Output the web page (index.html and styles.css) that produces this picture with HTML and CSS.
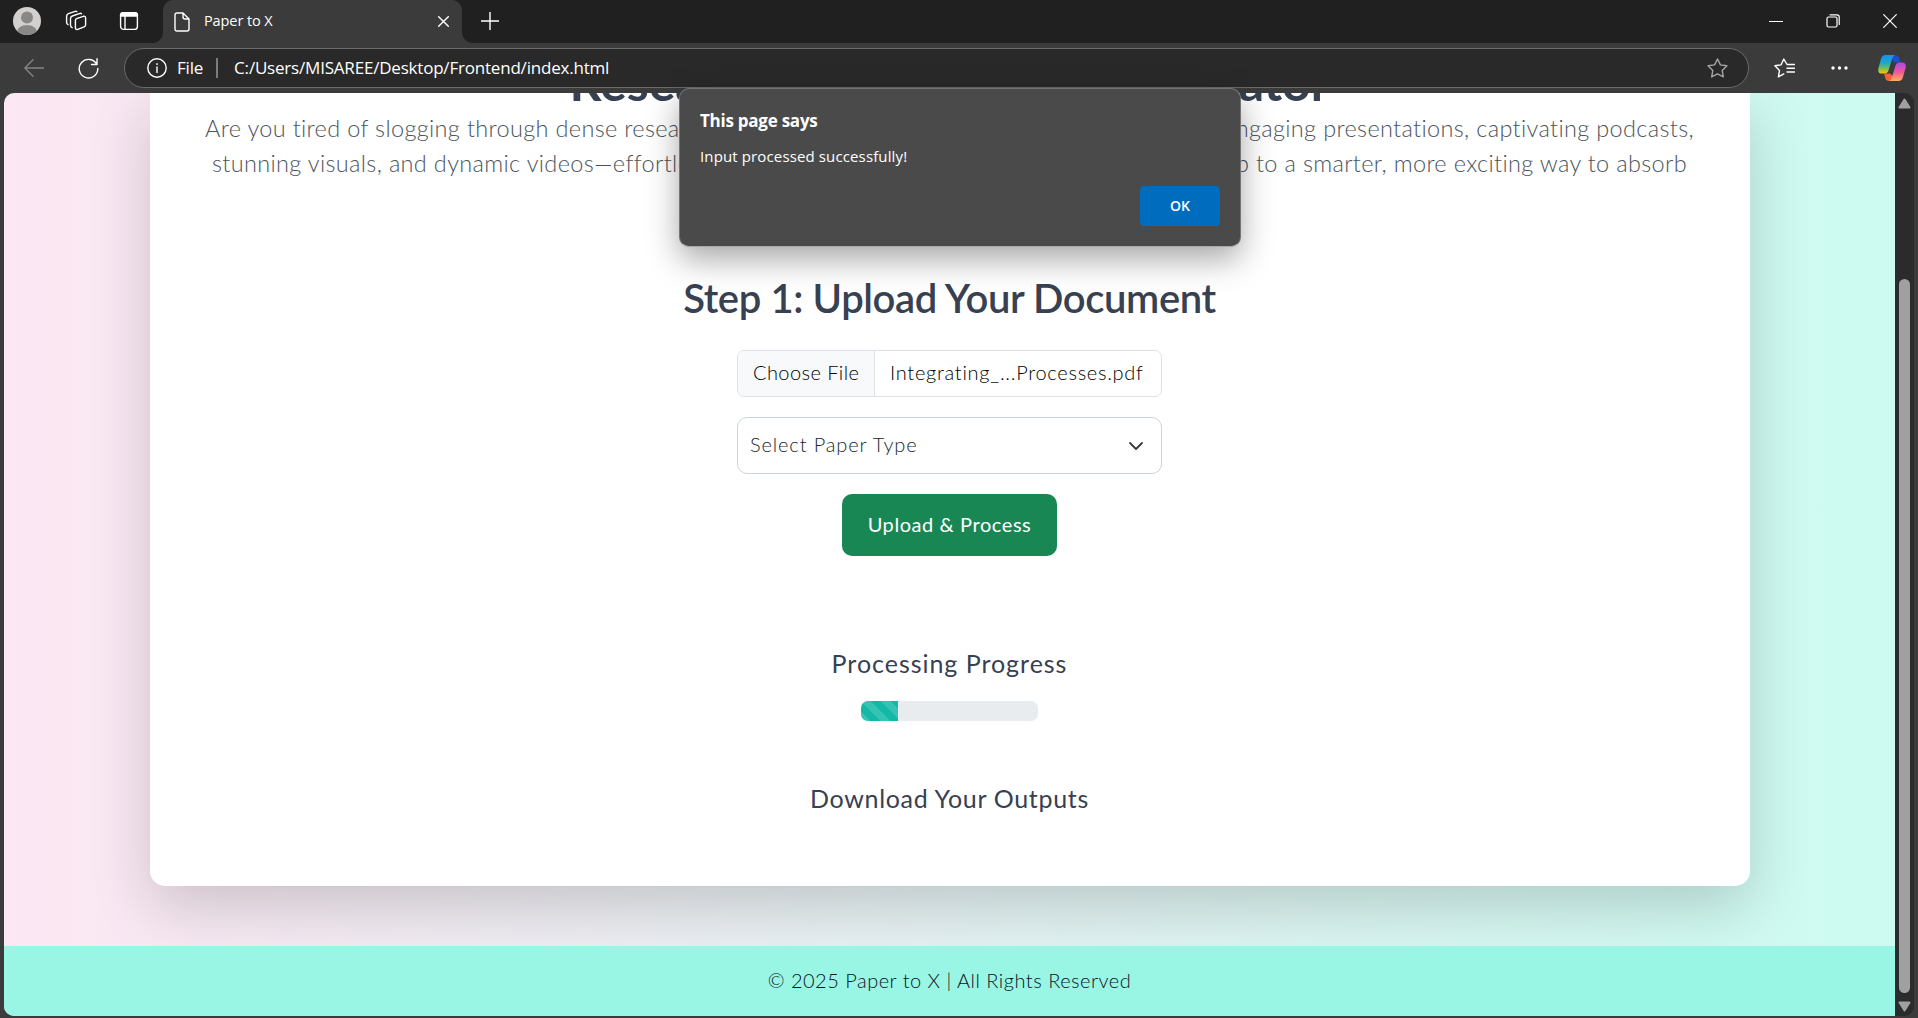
FILE: index.html
```html
<!DOCTYPE html>
<html lang="en">
<head>
<meta charset="utf-8">
<title>Paper to X</title>
<link rel="stylesheet" href="styles.css">
</head>
<body>
<div class="window">
  <header class="titlebar">
    <div class="tab-tools">
      <svg class="avatar" width="28" height="28" viewBox="0 0 28 28"><defs><clipPath id="face"><circle cx="14" cy="14" r="14"/></clipPath></defs><g clip-path="url(#face)"><rect width="28" height="28" fill="#d2d0ce"/><circle cx="14" cy="10.5" r="6" fill="#8a8886"/><ellipse cx="14" cy="25" rx="10" ry="7" fill="#8a8886"/></g></svg>
      <svg class="ico" width="22" height="22" viewBox="0 0 22 22"><path d="M11.500 8.600 18.300 6.300q2.300-.6 2.300 1.800v6.600q0 1.600-1.500 2.100l-6.300 2.600q-2.400.7-2.400-1.900v-7q0-1.500 1.100-1.900zM7.200 17.600q-1.700-.5-1.700-2.400V8.600q0-1.900 1.800-2.600L15 3.400q1-.3 1.500.4M3 14.600q-1.400-.7-1.400-2.400V6.300q0-1.900 1.800-2.600L10.300 1.300q1-.3 1.500.3" /></svg>
      <svg class="ico" width="20" height="20" viewBox="0 0 20 20"><rect x="1.600" y="1.600" width="16.800" height="16.800" rx="3"/><path d="M1.600 5V4Q1.600 1.600 4 1.600H16Q18.400 1.600 18.400 4V5z" fill="#fff"/><path d="M6 5v13"/></svg>
    </div>
    <div class="tab">
      <svg class="ico" width="16" height="20" viewBox="0 0 16 20"><path d="M1 3q0-2 2-2h6l6 6v10q0 2-2 2H3q-2 0-2-2zM9 1v4q0 2 2 2h4"/></svg>
      <span class="tab-title">Paper to X</span>
      <svg class="ico tab-x" width="11" height="11" viewBox="0 0 11 11"><path d="M.7.7l9.600 9.600M10.300.7.7 10.300"/></svg>
    </div>
    <svg class="ico plus" width="18" height="18" viewBox="0 0 18 18"><path d="M9 0v18M0 9h18"/></svg>
    <div class="win-buttons">
      <svg class="ico" width="14" height="14" viewBox="0 0 14 14"><path d="M.5 7.500h13"/></svg>
      <svg class="ico" width="14" height="14" viewBox="0 0 14 14"><rect x="1" y="3" width="10" height="10" rx="1.500"/><path d="M4 .800h7q2.200 0 2.200 2.200v7.500"/></svg>
      <svg class="ico" width="14" height="14" viewBox="0 0 14 14"><path d="M.7.7l12.600 12.600M13.300.7.7 13.300"/></svg>
    </div>
  </header>

  <div class="toolbar">
    <svg class="ico back" width="20" height="18" viewBox="0 0 20 18"><path d="M9 .8.900 9 9 17.200M1 9h19"/></svg>
    <svg class="ico reload" width="21" height="21" viewBox="0 0 21 21"><path d="M18.800 6.500A9.300 9.300 0 1 0 19.800 10.500M19 .8V6.500h-5.500"/></svg>
    <div class="address">
      <svg class="ico" width="20" height="20" viewBox="0 0 20 20"><circle cx="10" cy="10" r="9.200"/><path d="M10 9v5.500M10 5.600v.8"/></svg>
      <span class="scheme">File</span>
      <span class="bar"></span>
      <span class="url">C:/Users/MISAREE/Desktop/Frontend/index.html</span>
      <svg class="ico star" width="21" height="20" viewBox="0 0 21 20"><path d="M10.500 1l2.900 5.900 6.500.9-4.700 4.600 1.100 6.500-5.800-3-5.800 3 1.100-6.500L1.100 7.800l6.500-.9z"/></svg>
    </div>
    <svg class="ico fav" width="21" height="20" viewBox="0 0 21 20"><path d="M13 6.500 9.800 1 7 6.900.9 7.800l4.600 4.600-1.100 6.500 5.400-3M13 10.300h7.500M13 14h7.500M13 6.500h7.500" /></svg>
    <svg class="dots" width="17" height="4" viewBox="0 0 17 4"><circle cx="2" cy="2" r="1.700"/><circle cx="8.500" cy="2" r="1.700"/><circle cx="15" cy="2" r="1.700"/></svg>
    <svg class="copilot" width="28" height="26" viewBox="0 0 28 26">
      <defs>
        <linearGradient id="ca" x1="0" y1="0" x2="0" y2="1"><stop offset="0" stop-color="#1a8ff0"/><stop offset=".45" stop-color="#1fa9c4"/><stop offset=".75" stop-color="#7fbf4a"/><stop offset="1" stop-color="#ffc800"/></linearGradient>
        <linearGradient id="cb" x1="0" y1="0" x2="0" y2="1"><stop offset="0" stop-color="#a94bf0"/><stop offset=".5" stop-color="#ee5597"/><stop offset="1" stop-color="#ffb05a"/></linearGradient>
      </defs>
      <path d="M9 0h8q3 0 4 3l1.300 4.500H17L12 3z" fill="#1b4fd0"/>
      <path d="M19 26h-8q-3 0-3.800-3L6 18.500h6L17 23z" fill="#f4623a"/>
      <path d="M7.500 0H17q-2 .5-3 4l-3.500 11.500q-1 3-4 3H4q-4.500 0-3.700-5L3 4Q4 0 7.500 0z" fill="url(#ca)"/>
      <path d="M20.500 26H11q2-.5 3-4l3.500-11.500q1-3 4-3H24q4.500 0 3.700 5L25 22q-1 4-4.500 4z" fill="url(#cb)"/>
    </svg>
  </div>

  <div class="viewport">
    <div class="page">
      <main class="card">
        <h1 class="hero-title"><span>Research Paper</span><span>to X Generator</span></h1>
        <div class="lead lead-a"><span>Are you tired of slogging through dense research papers?</span><span>Get engaging presentations, captivating podcasts,</span></div>
        <div class="lead lead-b"><span>stunning visuals, and dynamic videos—effortlessly.</span><span>Step up to a smarter, more exciting way to absorb</span></div>
        <h2 class="step">Step 1: Upload Your Document</h2>
        <div class="file"><span class="choose">Choose File</span><span class="file-name">Integrating_...Processes.pdf</span></div>
        <div class="select"><span>Select Paper Type</span><svg width="16" height="16" viewBox="0 0 16 16"><path d="M2 5l6 6 6-6"/></svg></div>
        <button class="upload">Upload &amp; Process</button>
        <h5 class="sub progress-title">Processing Progress</h5>
        <div class="progress"><div class="progress-fill"></div></div>
        <h5 class="sub download-title">Download Your Outputs</h5>
      </main>
      <footer class="footer"><span>© 2025 Paper to X | All Rights Reserved</span></footer>
    </div>
    <div class="scrollbar">
      <svg width="13" height="11" viewBox="0 0 13 11"><path d="M6.500 1.500 11.500 9.500h-10z"/></svg>
      <div class="thumb"></div>
      <svg width="13" height="11" viewBox="0 0 13 11"><path d="M6.500 9.500 11.500 1.500h-10z"/></svg>
    </div>
  </div>

  <div class="dialog">
    <div class="dialog-title">This page says</div>
    <div class="dialog-text">Input processed successfully!</div>
    <button class="ok">OK</button>
  </div>
</div>
</body>
</html>
```
FILE: styles.css
```css
* { box-sizing: border-box; }
body { margin: 0; }
.window {
  position: relative;
  display: flex;
  flex-direction: column;
  width: 1918px;
  height: 1018px;
  overflow: hidden;
  background: #3b3b3b;
  font-family: "Open Sans", "Noto Sans", sans-serif;
  color: #fff;
}
span, .dialog-title, .dialog-text { white-space: nowrap; }
.ico { flex: none; fill: none; stroke: #fff; stroke-width: 1.4; stroke-linecap: round; stroke-linejoin: round; }

/* Title bar */
.titlebar { display: flex; height: 43px; background: #202020; }
.tab-tools { display: flex; align-items: center; width: 163px; padding: 0 0 1px 13px; }
.tab-tools .ico { margin-left: 24px; }
.tab-tools .ico + .ico { margin-left: 32px; }
.tab {
  position: relative;
  display: flex;
  align-items: center;
  width: 299px;
  padding: 0 13px 0 11px;
  background: #3b3b3b;
  border-radius: 10px 10px 0 0;
}
.tab::before, .tab::after { content: ""; position: absolute; bottom: 0; width: 10px; height: 10px; }
.tab::before { left: -10px; background: radial-gradient(circle at 0 0, transparent 9.5px, #3b3b3b 10px); }
.tab::after { right: -10px; background: radial-gradient(circle at 100% 0, transparent 9.5px, #3b3b3b 10px); }
.tab-title { margin-left: 14px; padding-bottom: 2px; font-size: 14.5px; letter-spacing: -0.1px; }
.tab-x { margin-left: auto; }
.plus { margin: 12px 0 0 19px; }
.win-buttons { display: flex; align-items: center; gap: 43px; margin-left: auto; padding: 0 21px 1px 0; }
.win-buttons .ico { stroke-width: 1.2; }

/* Toolbar */
.toolbar { display: flex; align-items: center; height: 50px; }
.back { margin-left: 24px; stroke: #848484; }
.reload { margin: 0 25px 0 34px; }
.address {
  display: flex;
  align-items: center;
  width: 1625px;
  height: 40px;
  padding: 0 20px 0 22px;
  border: 1px solid #6a6a6a;
  border-radius: 20px;
  background: #292929;
}
.scheme { margin-left: 10px; padding-bottom: 2px; font-size: 17px; letter-spacing: -0.2px; }
.bar { width: 2px; height: 20px; margin: 0 16px 0 13px; background: #7c7c7c; }
.url { padding-bottom: 2px; font-size: 17px; letter-spacing: -0.2px; }
.star { margin-left: auto; stroke: #a5a5a5; }
.fav { margin-left: 25px; }
.dots { margin-left: 36px; fill: #fff; }
.copilot { margin-left: 30px; }

/* Page viewport */
.viewport { display: flex; width: 1910px; height: 923px; margin-left: 4px; border-radius: 10px; overflow: hidden; background: #2b2b2b; }
.page {
  display: flex;
  flex-direction: column;
  align-items: center;
  width: 1891px;
  background: linear-gradient(90deg, #fce7f3, #ccfbf1);
  font-family: Lato, "Open Sans", sans-serif;
  color: #374151;
}
.card {
  display: flex;
  flex-direction: column;
  align-items: center;
  width: 1600px;
  height: 793px;
  flex: none;
  background: #fff;
  border-radius: 0 0 15px 15px;
  box-shadow: 0 20px 60px rgba(0, 0, 0, 0.175);
}
h1, h2, h5 { margin: 0; }
.hero-title { display: flex; align-items: flex-end; justify-content: space-between; width: 760px; height: 19px; font-size: 50px; line-height: 60px; font-weight: 700; }
.lead { display: flex; justify-content: space-between; height: 35px; line-height: 32px; font-size: 23.5px; font-weight: 300; letter-spacing: 0.34px; color: #4c555d; }
.lead-a { width: 1489px; }
.lead-b { width: 1475px; }
.step { height: 60px; margin-top: 86px; font-size: 40px; line-height: 60px; font-weight: 600; white-space: nowrap; letter-spacing: -0.4px; }
.file { display: flex; align-items: center; width: 425px; height: 47px; margin-top: 22px; border: 1px solid #dee2e6; border-radius: 7px; overflow: hidden; font-size: 20px; font-weight: 300; color: #000; }
.choose { display: flex; align-items: center; width: 137px; height: 100%; padding: 0 0 3px 15px; background: #f8f9fa; border-right: 1px solid #dee2e6; letter-spacing: 0.42px; }
.file-name { margin-left: 15px; padding-bottom: 3px; letter-spacing: 0.72px; }
.select { display: flex; align-items: center; justify-content: space-between; width: 425px; height: 57px; margin-top: 20px; padding: 0 17px 0 12px; border: 1px solid #cbd5e1; border-radius: 10px; font-size: 20px; font-weight: 300; letter-spacing: 0.87px; color: #20262c; }
.select span { padding-bottom: 3px; }
.select path { fill: none; stroke: #343a40; stroke-width: 1.8; stroke-linecap: round; stroke-linejoin: round; }
.upload { width: 215px; height: 62px; margin-top: 20px; padding: 0 0 3px; border: 0; border-radius: 10px; background: #198754; color: #fff; font: 400 20px Lato, sans-serif; letter-spacing: 0.57px; }
.sub { height: 30px; font-size: 25px; line-height: 28px; font-weight: 400; }
.progress-title { margin-top: 93px; letter-spacing: 0.97px; }
.progress { width: 177px; height: 20px; margin-top: 22px; border-radius: 7px; overflow: hidden; background: #e9ecef; }
.progress-fill {
  width: 37px;
  height: 20px;
  background: linear-gradient(45deg, rgba(255,255,255,.15) 25%, transparent 25%, transparent 50%, rgba(255,255,255,.15) 50%, rgba(255,255,255,.15) 75%, transparent 75%) 0 0 / 20px 20px #14b8a6;
}
.download-title { margin-top: 63px; letter-spacing: 0.67px; }
.footer { position: relative; display: flex; align-items: center; justify-content: center; width: 100%; height: 70px; margin-top: 60px; padding-bottom: 3px; background: #99f6e4; font-size: 20px; font-weight: 300; letter-spacing: 0.5px; color: #0b131f; }

/* Scrollbar */
.scrollbar { display: flex; flex-direction: column; align-items: center; width: 19px; padding: 5px 0 4px; background: #2b2b2b; }
.scrollbar svg { flex: none; fill: #a0a0a0; stroke: #a0a0a0; stroke-width: 2; stroke-linejoin: round; }
.thumb { width: 11px; height: 714px; margin: 170px 0 auto; border-radius: 6px; background: #a0a0a0; }

/* Alert dialog over the page */
.dialog {
  position: absolute;
  left: 679px;
  top: 88px;
  display: flex;
  flex-direction: column;
  width: 562px;
  height: 159px;
  padding: 20px 20px 19px;
  border: 1px solid #757575;
  border-bottom-color: #a8a8a8;
  border-radius: 10px;
  background: #4a4a4a;
  box-shadow: 0 12px 32px rgba(0, 0, 0, 0.35);
}
.dialog-title { height: 24px; line-height: 24px; font-size: 17px; font-weight: 700; letter-spacing: -0.25px; }
.dialog-text { height: 24px; margin-top: 11px; line-height: 24px; font-size: 15px; letter-spacing: 0.13px; }
.ok { align-self: flex-end; width: 80px; height: 40px; margin-top: 18px; padding: 0 0 2px; border: 0; border-radius: 4px; background: #006cbe; color: #fff; font: 600 14px "Open Sans", sans-serif; }
```
